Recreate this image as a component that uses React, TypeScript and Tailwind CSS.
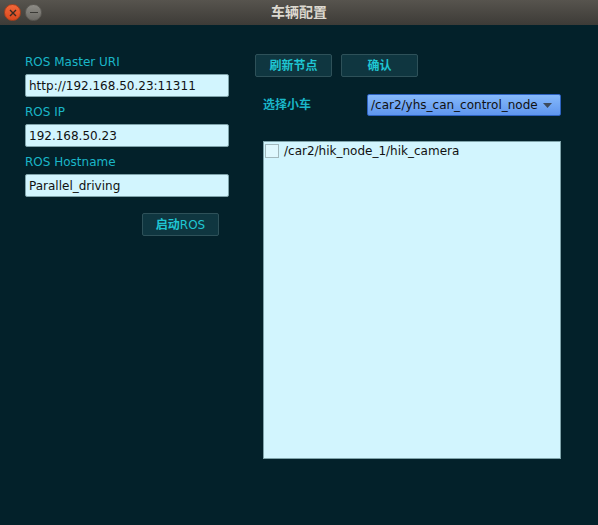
import React from "react";

const font = { fontFamily: '"DejaVu Sans", "Noto Sans CJK SC", sans-serif' };

function Field({ label, value }: { label: string; value: string }) {
  return (
    <div className="flex flex-col">
      <div className="flex h-[24px] items-center text-[12px] text-[#1ab6c8]">{label}</div>
      <div className="flex h-[23px] items-center rounded-[2px] border border-[#7fa3aa] bg-[#d2f5fe] px-[3px] text-[12px] text-[#111]">
        {value}
      </div>
    </div>
  );
}

function DarkButton({ children }: { children: React.ReactNode }) {
  return (
    <button className="flex h-[23px] w-[77px] items-center justify-center rounded-[2px] border border-[#2e5159] bg-[#0f3640] text-[12px] text-[#1fc6d3]">
      {children}
    </button>
  );
}

export default function App() {
  return (
    <div className="flex h-[525px] w-[598px] flex-col bg-[#03212a]" style={font}>
      {/* Title bar */}
      <div className="relative flex h-[25px] items-center justify-center bg-gradient-to-b from-[#57544e] to-[#3d3b37]">
        <div className="absolute left-[4px] top-[4px] flex gap-[4px]">
          <div className="flex h-[17px] w-[17px] items-center justify-center rounded-full border border-[#a8411d] bg-gradient-to-b from-[#f2683a] to-[#d9471c]">
            <svg width="8" height="8" viewBox="0 0 8 8">
              <path d="M1 1 L7 7 M7 1 L1 7" stroke="#3a2a22" strokeWidth="1.4" />
            </svg>
          </div>
          <div className="flex h-[17px] w-[17px] items-center justify-center rounded-full border border-[#5c5a55] bg-gradient-to-b from-[#8e8c86] to-[#6c6a65]">
            <div className="h-[1.5px] w-[8px] bg-[#3a3935]" />
          </div>
        </div>
        <span className="text-[14px] font-bold text-[#dcd8cf]">车辆配置</span>
      </div>

      <div className="flex flex-1">
        {/* Left column */}
        <div className="ml-[25px] flex w-[204px] flex-col pt-[25px]">
          <div className="flex flex-col gap-[3px]">
            <Field label="ROS Master URI" value="http://192.168.50.23:11311" />
            <Field label="ROS IP" value="192.168.50.23" />
            <Field label="ROS Hostname" value="Parallel_driving" />
          </div>
          <div className="mr-[10px] mt-[16px] flex justify-end">
            <DarkButton>
              <span className="font-bold">启动</span>ROS
            </DarkButton>
          </div>
        </div>

        {/* Right column */}
        <div className="ml-[26px] flex w-[306px] flex-col pt-[29px]">
          <div className="flex gap-[9px]">
            <DarkButton>
              <span className="font-bold">刷新节点</span>
            </DarkButton>
            <DarkButton>
              <span className="font-bold">确认</span>
            </DarkButton>
          </div>
          <div className="mt-[17px] flex h-[22px] items-center pl-[8px]">
            <span className="w-[104px] text-[12px] font-bold text-[#1ab6c8]">选择小车</span>
            <div className="flex h-[22px] w-[194px] items-center justify-between rounded-[2px] border border-[#2d62c0] bg-gradient-to-b from-[#86b9fb] to-[#5f96ee] pl-[3px] pr-[8px] text-[12px] text-[#111]">
              <span>/car2/yhs_can_control_node</span>
              <svg width="9" height="5" viewBox="0 0 9 5">
                <path d="M0 0 H9 L4.5 5 Z" fill="#3d4a5c" />
              </svg>
            </div>
          </div>
          <div className="ml-[8px] mt-[25px] h-[318px] w-[298px] border border-[#7fa3aa] bg-[#d2f5fe] pl-[1px] pt-[1px]">
            <div className="flex h-[15px] items-center gap-[5px]">
              <div className="h-[14px] w-[14px] border border-[#a2b9be] bg-[#dff8fe]" />
              <span className="text-[12px] text-[#111]">/car2/hik_node_1/hik_camera</span>
            </div>
          </div>
        </div>
      </div>
    </div>
  );
}
